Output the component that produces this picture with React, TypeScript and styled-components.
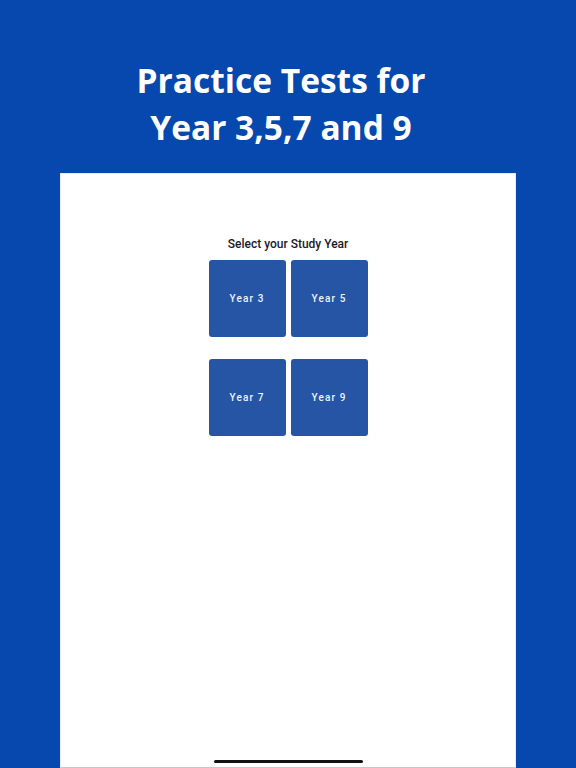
import React from 'react'
import styled, { createGlobalStyle } from 'styled-components'

const GlobalStyle = createGlobalStyle`
	html, body {
		margin: 0;
		padding: 0;
		background: #0648ae;
	}
	#root {
		height: 768px;
	}
`

const Screen = styled.div`
	height: 768px;
	display: flex;
	flex-direction: column;
	background: #0648ae;
	overflow: hidden;
`

const Header = styled.header`
	height: 173px;
	display: flex;
	align-items: center;
	justify-content: center;
	box-sizing: border-box;
	padding: 34px 14px 0 0;
`

const Heading = styled.h1`
	margin: 0;
	font-family: 'Open Sans', 'DejaVu Sans', sans-serif;
	font-weight: 700;
	font-size: 33.5px;
	line-height: 47px;
	color: #ffffff;
	text-align: center;
`

const Panel = styled.main`
	flex: 1;
	margin: 0 60px;
	background: #ffffff;
	border: 1px solid #e4ecf7;
	border-bottom-color: #c9c9c9;
	display: flex;
	flex-direction: column;
	align-items: center;
	padding-top: 62px;
`

const Prompt = styled.p`
	margin: 0 0 8px;
	font-family: Roboto, 'Liberation Sans', sans-serif;
	font-weight: 500;
	font-size: 12px;
	line-height: 16px;
	color: #1b1b2b;
`

const YearGrid = styled.div`
	display: grid;
	grid-template-columns: repeat(2, 77px);
	grid-auto-rows: 77px;
	column-gap: 5px;
	row-gap: 22px;
`

const YearButton = styled.button`
	border: none;
	border-radius: 3px;
	background: #2755a5;
	color: #eef3fb;
	font-family: Roboto, 'Liberation Sans', sans-serif;
	font-weight: 500;
	font-size: 10px;
	letter-spacing: 1.1px;
	padding: 0;
	cursor: pointer;
`

const HomeIndicator = styled.div`
	margin-top: auto;
	margin-bottom: 4px;
	width: 149px;
	height: 3px;
	border-radius: 2px;
	background: #111111;
`

const years = [3, 5, 7, 9]

export default function App() {
	return (
		<>
			<GlobalStyle />
			<Screen>
				<Header>
					<Heading>
						Practice Tests for
						<br />
						Year 3,5,7 and 9
					</Heading>
				</Header>
				<Panel>
					<Prompt>Select your Study Year</Prompt>
					<YearGrid>
						{years.map((year) => (
							<YearButton key={year}>Year {year}</YearButton>
						))}
					</YearGrid>
					<HomeIndicator />
				</Panel>
			</Screen>
		</>
	)
}
